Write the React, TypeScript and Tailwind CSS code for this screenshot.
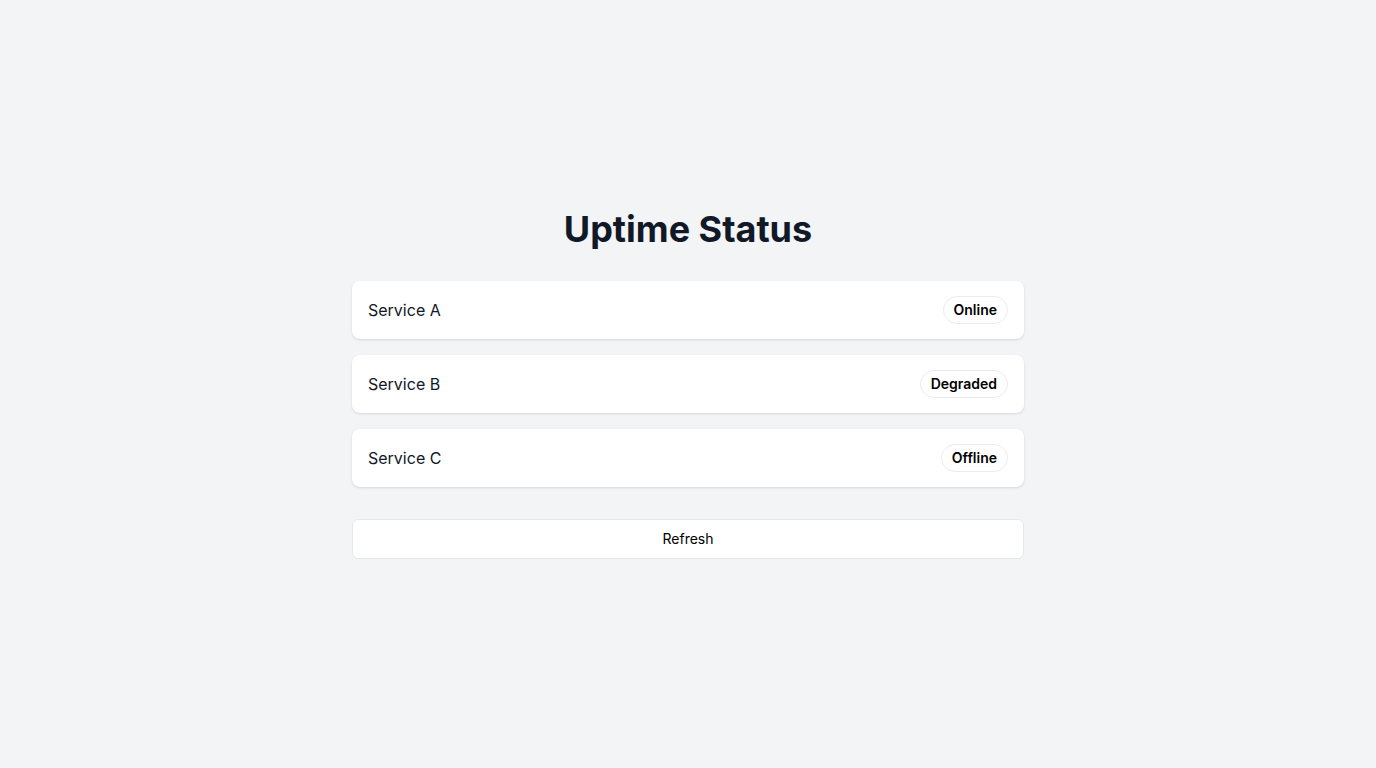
const services = [
    { name: "Service A", status: "Online" },
    { name: "Service B", status: "Degraded" },
    { name: "Service C", status: "Offline" },
];

export default function App() {
    return (
        <div className="min-h-screen w-full bg-[#f3f4f6] flex items-center justify-center font-['Inter',sans-serif]">
            <div className="w-[672px]">
                <h1 className="text-4xl font-bold text-[#111827] text-center mb-8">Uptime Status</h1>

                <div className="flex flex-col gap-4">
                    {services.map((s) => (
                        <div key={s.name} className="flex items-center justify-between bg-white rounded-lg shadow-sm h-[58px] px-4">
                            <span className="text-base text-[#111827]">{s.name}</span>
                            <span className="rounded-full border border-[#ececec] px-2.5 py-[3px] text-sm font-semibold text-black">
                                {s.status}
                            </span>
                        </div>
                    ))}
                </div>

                <button className="mt-8 w-full h-10 bg-white border border-[#e5e7eb] rounded-md text-sm font-normal text-black">
                    Refresh
                </button>
            </div>
        </div>
    );
}
